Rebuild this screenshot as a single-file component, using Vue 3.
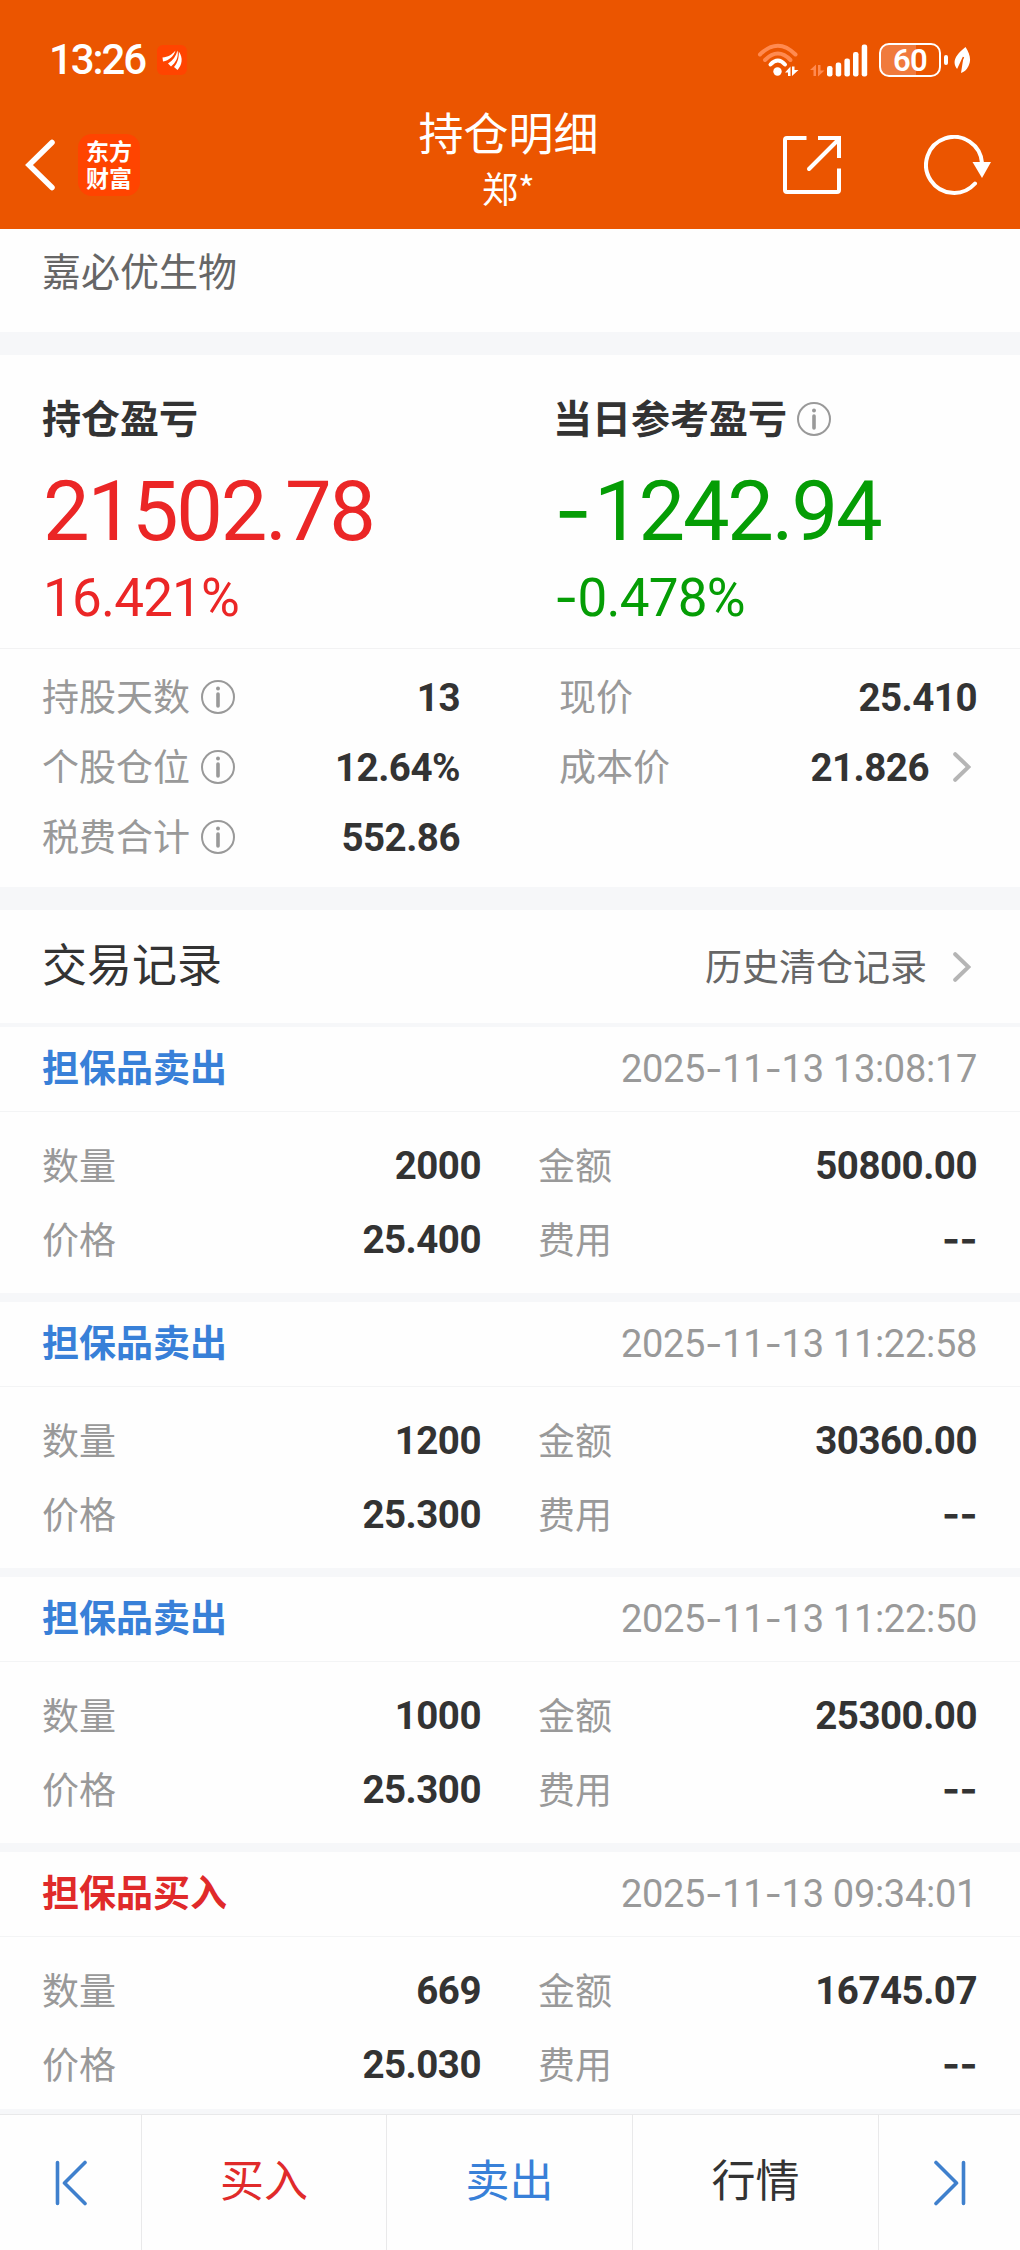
<script setup>
import { h, ref } from "vue";

const stockName = "嘉必优生物";

const leftStats = [
  { label: "持股天数", value: "13" },
  { label: "个股仓位", value: "12.64%" },
  { label: "税费合计", value: "552.86" },
];

const rightStats = [
  { label: "现价", value: "25.410" },
  { label: "成本价", value: "21.826", link: true },
];

const records = ref([
  { type: "sell", title: "担保品卖出", time: "2025-11-13 13:08:17", qty: "2000", amount: "50800.00", price: "25.400", fee: "--" },
  { type: "sell", title: "担保品卖出", time: "2025-11-13 11:22:58", qty: "1200", amount: "30360.00", price: "25.300", fee: "--" },
  { type: "sell", title: "担保品卖出", time: "2025-11-13 11:22:50", qty: "1000", amount: "25300.00", price: "25.300", fee: "--" },
  { type: "buy", title: "担保品买入", time: "2025-11-13 09:34:01", qty: "669", amount: "16745.07", price: "25.030", fee: "--" },
]);

// number text, the dashes get their own wider glyph
const Num = (props) =>
  h(
    "span",
    { class: "num" },
    props.text.split(/(-+)/).filter(Boolean).map((t) => (t[0] === "-" ? h("span", { class: "dash" }, t) : t))
  );
Num.props = ["text"];

const InfoIcon = () =>
  h("svg", { class: "info-icon", viewBox: "0 0 34 34" }, [
    h("circle", { cx: 17, cy: 17, r: 16, fill: "none", stroke: "#999", "stroke-width": 2 }),
    h("circle", { cx: 17, cy: 8.5, r: 2, fill: "#999" }),
    h("path", { d: "M17 14v12", stroke: "#999", "stroke-width": 3.6, "stroke-linecap": "round" }),
  ]);

const Arrow = () =>
  h("svg", { class: "arrow", viewBox: "0 0 18 30" }, [
    h("path", { d: "M2.2 2.2L15.5 15L2.2 27.8", fill: "none", stroke: "#b5b5b5", "stroke-width": 4, "stroke-linecap": "round" }),
  ]);
</script>

<template>
  <div class="page">
    <header class="header">
      <div class="status">
        <span class="clock">13:26</span>
        <svg class="app-dot" viewBox="0 0 30 30">
          <rect width="30" height="30" rx="6" fill="#ff4400" />
          <path d="M5.5 12.5C11 12.2 15 9.5 18.5 5.5C17 11 12 15.5 6 16.5Z" fill="#fff" />
          <path d="M11 18.5C16 15.5 19 11 20.5 5.5C22 12 18.5 18 14 21.5Z" fill="#fff" />
          <path d="M17 22C21 17.5 22 12 21.8 6.5C26.5 13 25 20 20.5 25Z" fill="#fff" />
        </svg>
        <div class="status-right">
          <svg class="wifi" viewBox="0 0 42 34" fill="none">
            <g stroke-width="4" stroke-linecap="round">
              <path d="M3 11.5Q21 -6 38.5 11.5" stroke="#ff8a50" />
              <path d="M8 17Q21 4 33.5 17" stroke="#ff8a50" />
              <path d="M13.5 21.5Q21 13.5 28 21.5" stroke="#fff" />
            </g>
            <circle cx="20.5" cy="28.5" r="4.2" fill="#fff" />
            <path d="M28 29.5l5.5-6v9.500h-2.500v-3.500zM35 23.500h2.500v3.500h4l-6.500 6z" fill="#fff" />
          </svg>
          <svg class="signal" viewBox="0 0 58 34">
            <path d="M0 27l6-5.500v11.500h-2.500v-6zM8 22h2.500v5.500h4l-6.500 6z" fill="#ff8a50" />
            <g fill="#fff">
              <rect x="17" y="23" width="5.5" height="10.5" rx="2.2" />
              <rect x="25.7" y="19.5" width="5.5" height="14" rx="2.2" />
              <rect x="34.4" y="15.5" width="5.5" height="18" rx="2.2" />
              <rect x="43" y="9" width="5.5" height="24.5" rx="2.2" />
              <rect x="51.7" y="1.5" width="5.5" height="32" rx="2.2" />
            </g>
          </svg>
          <div class="battery"><span>60</span></div>
          <i class="battery-tip"></i>
          <svg class="leaf" viewBox="0 0 18 28">
            <path d="M12.5 1C17 8 18.5 14 15.5 20C13.5 24 11 26 8 27L10.5 11L4.5 23.5C-1 17 1 10 12.5 1Z" fill="#fff" />
            <path d="M4.2 24.5L10.5 11" stroke="#eb5500" stroke-width="1.5" />
          </svg>
        </div>
      </div>

      <div class="nav">
        <div class="nav-left">
          <svg class="back" viewBox="0 0 30 52">
            <path d="M27 3.5L4 26L27 48.5" fill="none" stroke="#fff" stroke-width="5.5" stroke-linecap="round" />
          </svg>
          <div class="logo"><span>东方财富</span></div>
        </div>
        <div class="nav-title">
          <h1>持仓明细</h1>
          <p>郑*</p>
        </div>
        <div class="nav-right">
          <svg class="share" viewBox="0 0 60 60" fill="none" stroke="#fff" stroke-width="4">
            <path d="M24.5 3H5Q3 3 3 5V55Q3 57 5 57H55Q57 57 57 55V33.5" />
            <path d="M36 3H57V23" />
            <path d="M27 34L56 5" stroke-linecap="round" />
          </svg>
          <svg class="refresh" viewBox="0 0 68 60">
            <path d="M58 28A28 28 0 1 0 51 48.5" fill="none" stroke="#fff" stroke-width="4" stroke-linecap="round" />
            <path d="M48.5 27h18.5L58 43z" fill="#fff" />
          </svg>
        </div>
      </div>
    </header>

    <section class="stock">{{ stockName }}</section>

    <!-- Profit summary -->
    <section class="profit">
      <div class="profit-col up">
        <div class="profit-title"><span>持仓盈亏</span></div>
        <Num class="big" text="21502.78" />
        <Num class="rate" text="16.421%" />
      </div>
      <div class="profit-col down">
        <div class="profit-title"><span>当日参考盈亏</span><InfoIcon /></div>
        <Num class="big" text="-1242.94" />
        <Num class="rate" text="-0.478%" />
      </div>
    </section>

    <section class="stats">
      <div class="stats-left">
        <div v-for="s in leftStats" :key="s.label" class="stat">
          <span class="label">{{ s.label }}</span>
          <InfoIcon />
          <Num class="value" :text="s.value" />
        </div>
      </div>
      <div class="stats-right">
        <div v-for="s in rightStats" :key="s.label" class="stat">
          <span class="label">{{ s.label }}</span>
          <Num class="value" :text="s.value" />
          <Arrow v-if="s.link" />
        </div>
      </div>
    </section>

    <section class="records-head">
      <h2>交易记录</h2>
      <a class="history"><span>历史清仓记录</span><Arrow /></a>
    </section>

    <!-- Trade records -->
    <section class="records">
      <article v-for="r in records" :key="r.time" class="record">
        <div class="record-top">
          <span class="record-type" :class="r.type">{{ r.title }}</span>
          <Num class="record-time" :text="r.time" />
        </div>
        <div class="record-body">
          <span class="label">数量</span>
          <Num class="value" :text="r.qty" />
          <span class="label second">金额</span>
          <Num class="value" :text="r.amount" />
          <span class="label">价格</span>
          <Num class="value" :text="r.price" />
          <span class="label second">费用</span>
          <Num class="value" :text="r.fee" />
        </div>
      </article>
    </section>

    <footer class="tabbar">
      <button class="tab">
        <svg class="skip" viewBox="0 0 32 46"><path d="M2.5 2.5V43.5M30 2.5L9.5 23L30 43.5" /></svg>
      </button>
      <button class="tab buy">买入</button>
      <button class="tab sell">卖出</button>
      <button class="tab">行情</button>
      <button class="tab">
        <svg class="skip" viewBox="0 0 32 46"><path d="M29.5 2.5V43.5M2 2.5L22.5 23L2 43.5" /></svg>
      </button>
    </footer>
  </div>
</template>

<style>
body {
  margin: 0;
  background: #fff;
}
</style>

<style scoped>
.page {
  width: 1020px;
  height: 2250px;
  display: flex;
  flex-direction: column;
  overflow: hidden;
  background: #fefefe;
  color: #333;
  font-family: "Noto Sans CJK SC", sans-serif;
}

svg {
  display: block;
  flex: none;
}

.header {
  height: 229px;
  background: #eb5500;
  color: #fff;
}

.status {
  height: 101px;
  padding: 18px 49px 0 49px;
  box-sizing: border-box;
  display: flex;
  align-items: center;
}

.clock {
  font: 500 42px/42px Roboto, sans-serif;
  width: 108px;
  letter-spacing: -2.1px;
}

.app-dot {
  width: 30px;
  height: 30px;
}

.status-right {
  margin-left: auto;
  display: flex;
  align-items: center;
}

.wifi {
  width: 42px;
  height: 34px;
}

.signal {
  width: 58px;
  height: 34px;
  margin-left: 11px;
}

.battery {
  width: 62px;
  height: 34px;
  margin-left: 11px;
  box-sizing: border-box;
  border: 2.5px solid #fff;
  border-radius: 10px;
  background: linear-gradient(90deg, #f07a3c 60%, transparent 60%);
  text-align: center;
  font: 600 31px/31px Roboto, sans-serif;
  letter-spacing: -0.6px;
}

.battery-tip {
  width: 4px;
  height: 10px;
  margin-left: 3px;
  border-radius: 2px;
  background: #fff;
}

.leaf {
  width: 18px;
  height: 28px;
  margin-left: 5px;
}

.nav {
  height: 128px;
  padding: 0 28px 0 25px;
  display: grid;
  grid-template-columns: 1fr auto 1fr;
  align-items: center;
}

.nav-left,
.nav-right {
  display: flex;
  align-items: center;
}

.nav-right {
  justify-content: flex-end;
}

.back {
  width: 30px;
  height: 52px;
}

.logo {
  width: 62px;
  height: 62px;
  margin-left: 23px;
  border-radius: 14px;
  background: #ff4400;
  display: flex;
  justify-content: center;
  align-items: center;
}

.logo span {
  width: 46px;
  margin-top: -2px;
  font-size: 23px;
  line-height: 27px;
  font-weight: 700;
}

.nav-title {
  text-align: center;
  padding-bottom: 16px;
}

.nav-title h1 {
  margin: 0;
  font-size: 45px;
  line-height: 60px;
  font-weight: 400;
}

.nav-title p {
  margin: 0;
  font-size: 36px;
  line-height: 50px;
}

.share {
  width: 60px;
  height: 60px;
}

.refresh {
  width: 68px;
  height: 60px;
  margin-left: 82px;
}

.stock {
  height: 103px;
  box-sizing: border-box;
  padding: 11px 42px 0;
  font-size: 39px;
  line-height: 58px;
  color: #666;
}

.profit {
  border-top: 23px solid #f6f7f9;
  border-bottom: 1px solid #f2f2f3;
  height: 293px;
  display: grid;
  grid-template-columns: 511px 1fr;
  padding-left: 42px;
}

.profit-col {
  display: flex;
  flex-direction: column;
  padding-top: 34px;
}

.profit-title {
  display: flex;
  align-items: center;
  height: 60px;
  font-size: 39px;
  line-height: 60px;
  font-weight: 700;
  color: #333;
}

.profit-title span {
  padding-bottom: 7px;
}

.profit-title .info-icon {
  margin-left: 10px;
}

.info-icon {
  width: 34px;
  height: 34px;
}

.num {
  font-family: Roboto, sans-serif;
  white-space: pre;
}

.num :deep(.dash) {
  font-family: Inter, sans-serif;
  line-height: 0;
}

.big {
  font-size: 83px;
  line-height: 96px;
  margin: 15px 0 0 1px;
  letter-spacing: -2.2px;
}

.big :deep(.dash) {
  margin-right: 4px;
}

.rate {
  font-size: 53px;
  line-height: 60px;
  margin: 8px 0 0 1px;
  letter-spacing: -0.8px;
}

.up {
  color: #eb2626;
}

.down {
  color: #059d05;
}

.stats {
  height: 238px;
  box-sizing: border-box;
  padding: 13px 43px 0 42px;
  display: grid;
  grid-template-columns: 418px 1fr;
  column-gap: 99px;
}

.stat {
  height: 70px;
  display: flex;
  align-items: center;
}

.stat .info-icon {
  margin-left: 11px;
}

.label {
  font-size: 37px;
  line-height: 56px;
  padding-bottom: 5px;
  color: #999;
}

.value {
  margin-left: auto;
  font-size: 38.5px;
  line-height: 56px;
  font-weight: 700;
  letter-spacing: -0.5px;
  text-align: right;
}

.stat .value {
  padding-top: 2px;
}

.stat .arrow {
  margin: 0 6px 0 24px;
}

.arrow {
  width: 18px;
  height: 30px;
}

.records-head {
  height: 113px;
  border-top: 23px solid #f6f7f9;
  border-bottom: 4px solid #f6f7f9;
  padding: 0 49px 0 42px;
  display: flex;
  align-items: center;
  justify-content: space-between;
}

.records-head h2 {
  margin: 0;
  padding-bottom: 8px;
  font-size: 45px;
  line-height: 66px;
  font-weight: 400;
}

.history {
  display: flex;
  align-items: center;
  gap: 26px;
  font-size: 37px;
  line-height: 56px;
  color: #666;
}

.history span {
  padding-bottom: 4px;
}

.record {
  height: 266px;
  border-bottom: 9px solid #f6f7f9;
}

.record:last-child {
  height: 257px;
  border-bottom-width: 5px;
}

.record-top {
  height: 84px;
  border-bottom: 1px solid #f3f4f5;
  padding: 0 43px 0 42px;
  display: flex;
  align-items: center;
  justify-content: space-between;
}

.record-type {
  padding-bottom: 6px;
  font-size: 37px;
  line-height: 56px;
  font-weight: 700;
}

.record-time {
  padding-bottom: 1px;
  font-size: 38px;
  line-height: 56px;
  letter-spacing: -0.3px;
  color: #999;
}

.record-body {
  padding: 17px 43px 0 42px;
  display: grid;
  grid-template-columns: 100px 339px 157px 1fr;
  grid-auto-rows: 74px;
  align-items: center;
}

.record-body .second {
  padding-left: 57px;
}

.buy {
  color: #e02a2a;
}

.sell {
  color: #3880d8;
}

.tabbar {
  flex: 1;
  border-top: 1px solid #e9e9ea;
  display: grid;
  grid-template-columns: 142px 245px 246px 246px 1fr;
}

.tab {
  display: flex;
  align-items: center;
  justify-content: center;
  padding: 0 0 10px;
  border: 0;
  border-right: 1px solid #e9e9ea;
  background: none;
  font-family: inherit;
  font-size: 44px;
  cursor: pointer;
}

.tab:not(.buy):not(.sell) {
  color: #333;
}

.tab:first-child,
.tab:last-child {
  padding-bottom: 0;
}

.tab:last-child {
  border-right: 0;
}

.skip {
  width: 32px;
  height: 46px;
}

.skip path {
  fill: none;
  stroke: #3f80cd;
  stroke-width: 3.6;
  stroke-linecap: round;
  stroke-linejoin: round;
}
</style>
